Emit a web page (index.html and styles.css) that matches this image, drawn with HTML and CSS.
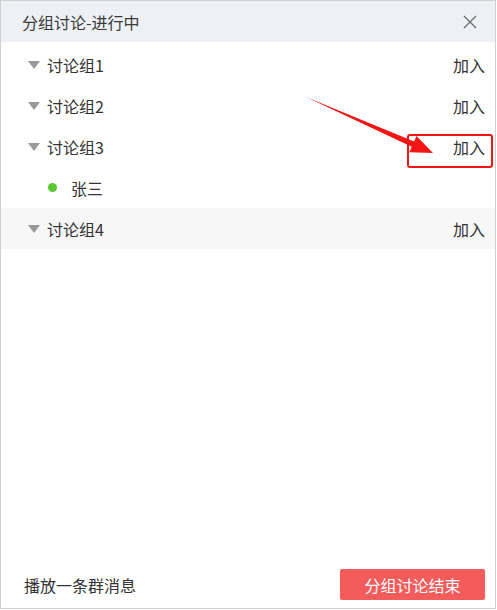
FILE: index.html
```html
<!DOCTYPE html>
<html lang="zh-CN">
<head>
  <meta charset="UTF-8">
  <meta name="viewport" content="width=device-width, initial-scale=1.0">
  <title>分组讨论</title>
  <link rel="stylesheet" href="styles.css">
</head>
<body>
  <div class="dialog">
    <div class="dialog-header">
      <span class="dialog-title">分组讨论-进行中</span>
      <svg class="close-icon" width="14" height="14" viewBox="0 0 14 14">
        <path d="M1 1 L13 13 M13 1 L1 13" stroke="#6f6f6f" stroke-width="1.4" fill="none"/>
      </svg>
    </div>

    <div class="group-list">
      <div class="group-row">
        <span class="caret"></span>
        <span class="group-name">讨论组1</span>
        <span class="join">加入</span>
      </div>
      <div class="group-row">
        <span class="caret"></span>
        <span class="group-name">讨论组2</span>
        <span class="join">加入</span>
      </div>
      <div class="group-row">
        <span class="caret"></span>
        <span class="group-name">讨论组3</span>
        <span class="join">加入</span>
      </div>
      <div class="member-row">
        <span class="online-dot"></span>
        <span class="member-name">张三</span>
      </div>
      <div class="group-row active">
        <span class="caret"></span>
        <span class="group-name">讨论组4</span>
        <span class="join">加入</span>
      </div>
    </div>

    <div class="dialog-footer">
      <span class="broadcast">播放一条群消息</span>
      <button class="end-btn">分组讨论结束</button>
    </div>

    <!-- annotation overlay -->
    <svg class="annotation" width="496" height="609" viewBox="0 0 496 609">
      <polygon points="306,97 414.1,141.4 416.5,135.9 433,153 409.3,152.3 411.7,146.8" fill="#f41515"/>
      <rect x="408" y="135" width="84" height="32" rx="2" fill="none" stroke="#f41515" stroke-width="2"/>
    </svg>
  </div>
</body>
</html>
```

FILE: styles.css
```css
body {
  margin: 0;
  font-family: "Noto Sans CJK SC", "Liberation Sans", sans-serif;
  color: #333;
  background: #fff;
}

.dialog {
  position: relative;
  width: 496px;
  height: 609px;
  border: 1px solid #cfcfcf;
  box-sizing: border-box;
  display: flex;
  flex-direction: column;
  background: #fff;
}

.dialog-header {
  height: 41px;
  background-color: #edf0f4;
  display: flex;
  align-items: center;
  justify-content: space-between;
  padding: 0 18px 0 21px;
}

.dialog-title {
  font-size: 16px;
  line-height: 20px;
  color: #3a3a3a;
}

.close-icon {
  display: block;
}

.group-list {
  flex: 1;
  padding-top: 2px;
}

.group-row,
.member-row {
  height: 41px;
  display: flex;
  align-items: center;
  font-size: 16px;
  line-height: 20px;
}

.group-row {
  padding: 0 10px 0 27px;
}

.group-row.active {
  background-color: #f7f7f7;
}

.caret {
  width: 0;
  height: 0;
  border-left: 6px solid transparent;
  border-right: 6px solid transparent;
  border-top: 8px solid #999;
  margin-right: 7px;
}

.group-name {
  flex: 1;
  color: #333;
}

.join {
  color: #333;
}

.member-row {
  padding-left: 47px;
}

.online-dot {
  width: 9px;
  height: 9px;
  border-radius: 50%;
  background-color: #5ac72e;
  margin-right: 14px;
}

.member-name {
  color: #333;
}

.dialog-footer {
  display: flex;
  align-items: center;
  justify-content: space-between;
  padding: 0 10px 8px 23px;
}

.broadcast {
  font-size: 16px;
  color: #333;
}

.end-btn {
  width: 145px;
  height: 31px;
  border: none;
  border-radius: 2px;
  background-color: #f45b5b;
  color: #fff;
  font-family: inherit;
  font-size: 16px;
  line-height: 20px;
  padding: 0;
  cursor: pointer;
}

.annotation {
  position: absolute;
  left: -1px;
  top: -1px;
  pointer-events: none;
}
```
